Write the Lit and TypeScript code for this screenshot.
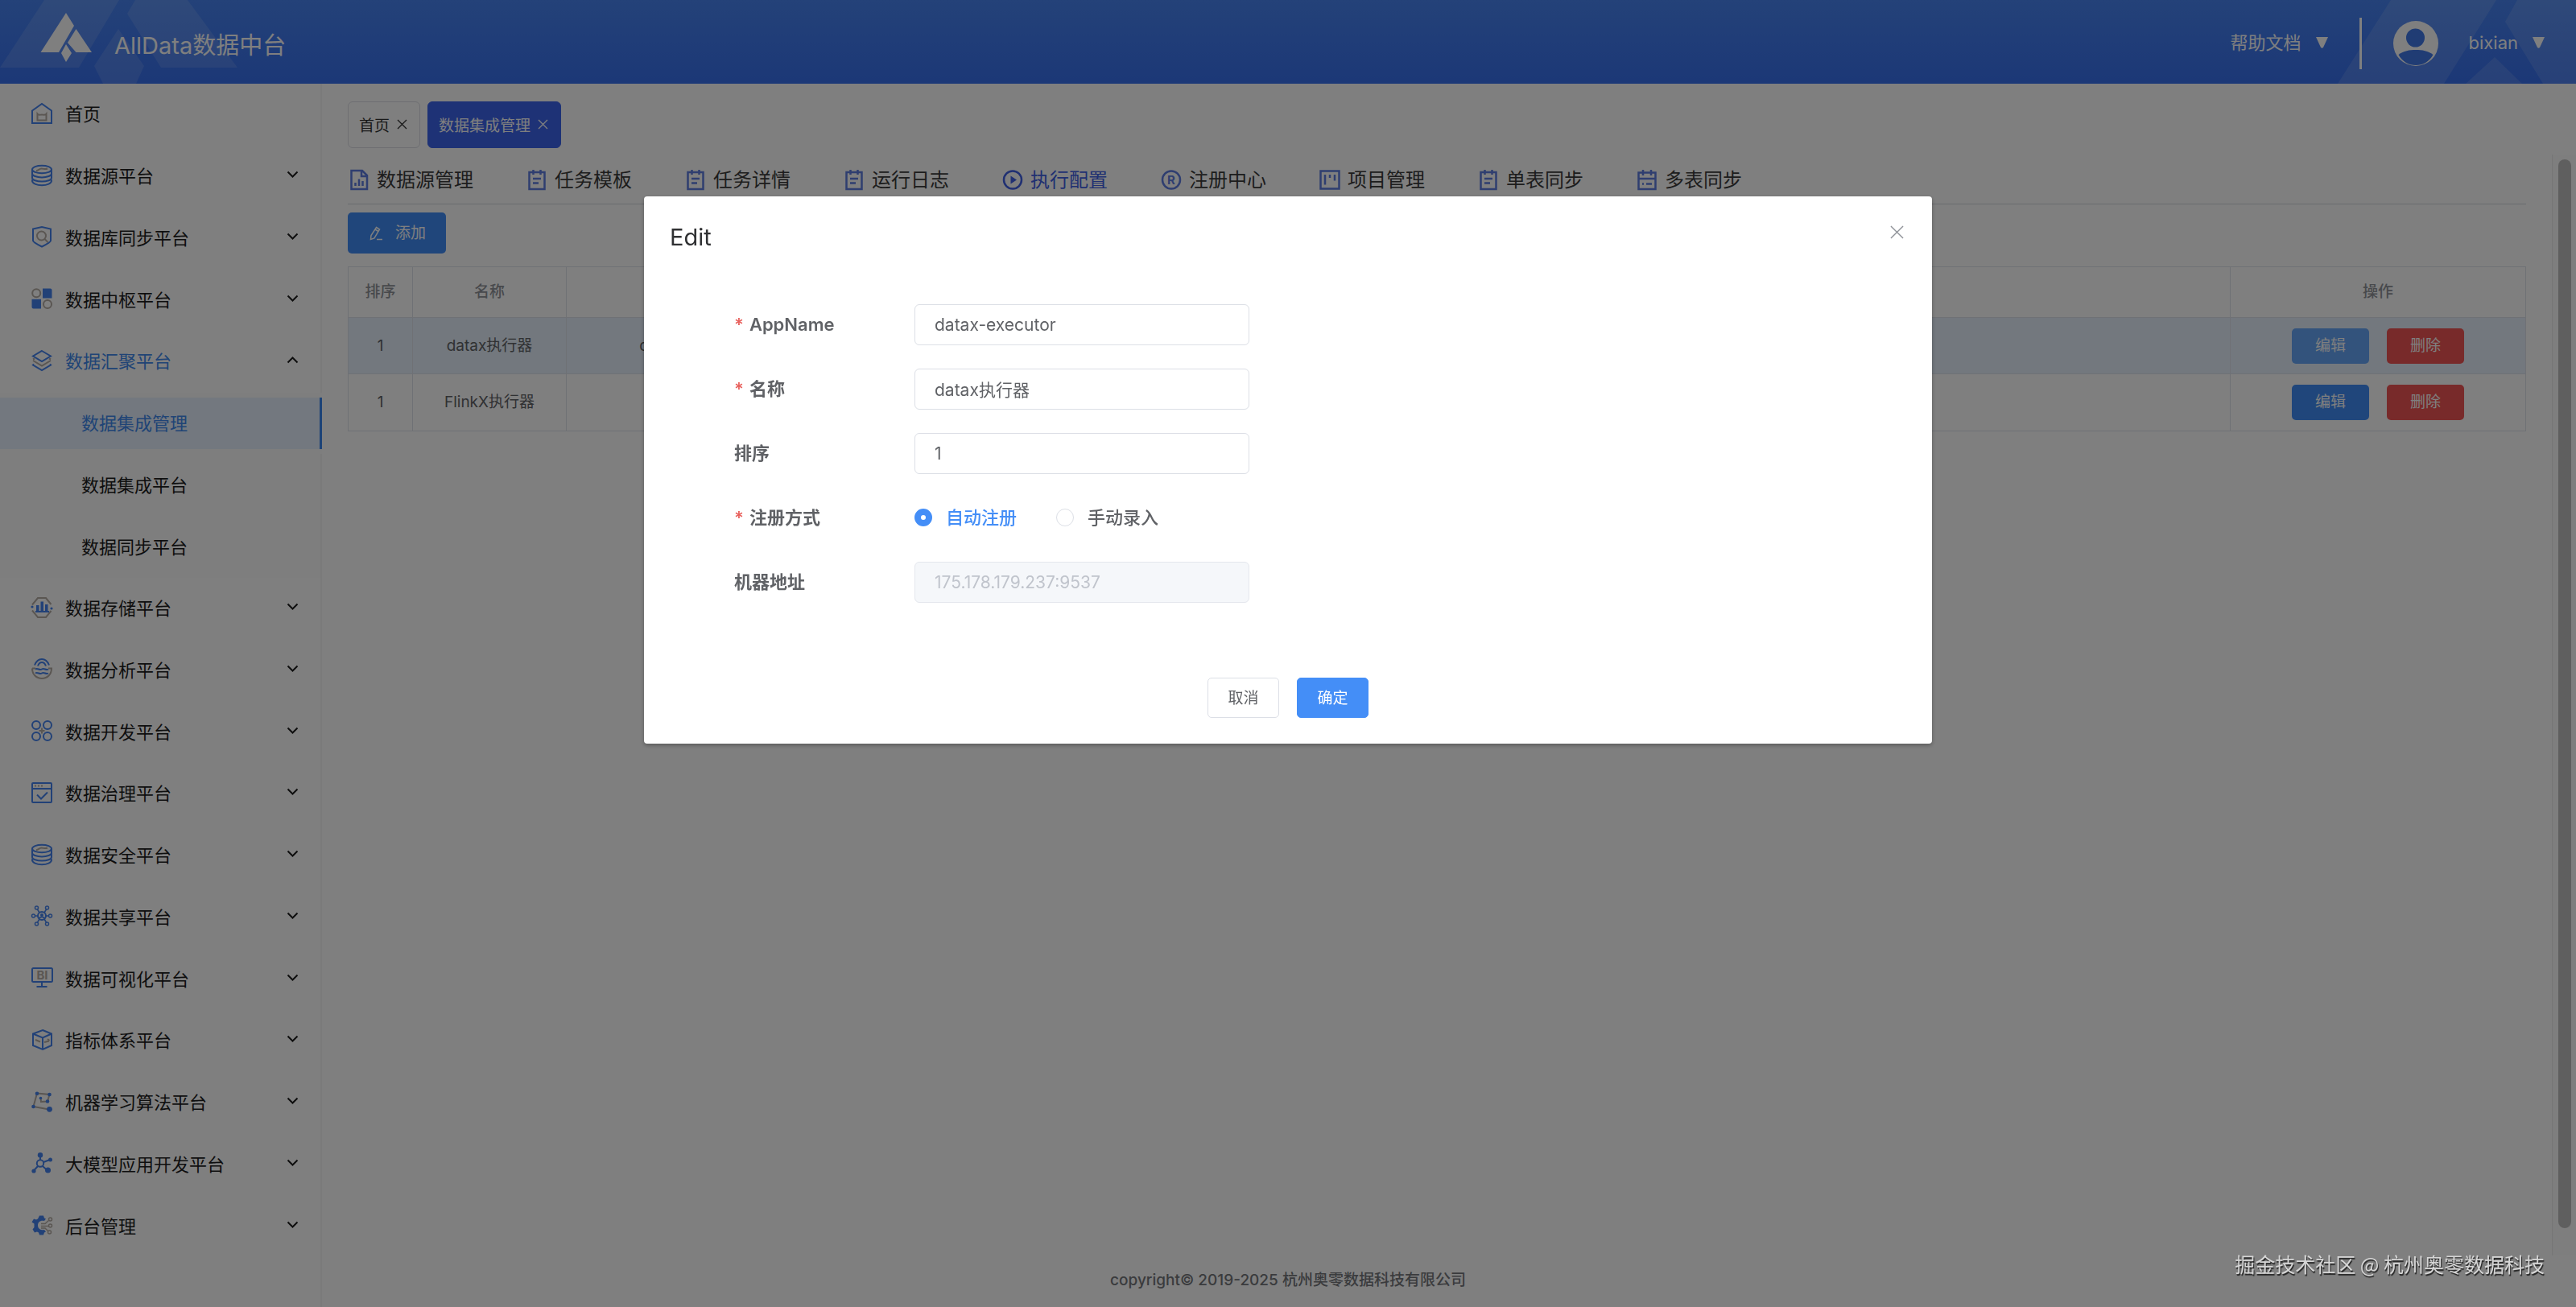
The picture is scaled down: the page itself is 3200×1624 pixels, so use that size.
import { LitElement, html, svg, css, nothing } from "lit";
import type { SVGTemplateResult } from "lit";
import { customElement, state } from "lit/decorators.js";
import { classMap } from "lit/directives/class-map.js";

const disc = svg`
  <ellipse cx="13" cy="5.5" rx="12" ry="4.7"/>
  <path d="M1 5.5v5.2c0 2.6 5.4 4.7 12 4.7s12-2.1 12-4.7V5.5M1 10.7v5.2c0 2.6 5.4 4.7 12 4.7s12-2.1 12-4.7v-5.2M2 17.500c-.6.5-1 1.400-1 2.300C1 22.700 6.400 25.200 13 25.200s12-2.500 12-5.400c0-.9-.4-1.700-1-2.300"/>
  <path class="alt" d="M6 7c2.500.5 3.500-2.500 6.500-2.500S17 6 20 4.500"/>`;

const sideIcons: Record<string, SVGTemplateResult> = {
  home: svg`
    <path d="M1 9.500 13 1l12 8.500V25H1Z"/>
    <path class="alt" d="M7.500 13.500v8h11v-8c-1.500 2-3.500 1-5.500 1s-4 1-5.500-1Z"/>`,
  source: disc,
  shield: svg`
    <path d="M2 3.500 13 1l11 2.500V18c0 2-5 4.500-11 7.500C7 22.500 2 20 2 18Z"/>
    <circle class="alt" cx="12.500" cy="12" r="5.500"/><path class="alt" d="m16.500 16 4 4"/>`,
  hub: svg`
    <circle class="alt" cx="6.200" cy="6.300" r="5"/><circle class="alt" cx="20" cy="20" r="5"/>
    <path class="solid" d="M14 .5h9.500a2 2 0 0 1 2 2v10H14ZM.5 13.800H12v11.700H2.500a2 2 0 0 1-2-2Z"/>`,
  layers: svg`
    <path d="M13 1 24 7.500 13 14 2 7.500Z"/>
    <path class="alt" d="m2 11.500 2-1M24 11.500l-2-1M2 13l11 6.500L24 13"/>
    <path d="m3 17.500-1 1L13 25l11-6.500-1-1"/>`,
  storage: svg`
    <path class="alt" d="M1 9.500 8 1h10l6.500 8M1 16.500 8 25h10l6.500-8"/>
    <circle class="solid" cx="1" cy="12" r="1.600"/><circle class="solid" cx="25" cy="14" r="1.600"/>
    <path class="solid" d="M6 10h3.500v7H6ZM11.500 5.500h3.500V17h-3.500ZM17 9h3.500v8H17ZM5 17h17v2H5Z"/>`,
  analysis: svg`
    <path d="M4 8.500C6 3.500 9 1 13 1s7 2.500 9 7.500M8 9.500c1-3 3-4.500 5-4.500s4 1.500 5 4.500"/>
    <path class="alt" d="M1 12.500h4M21 12.500h4C25 20 20 25 13 25S1 20 1 12.500"/>
    <path d="M5 13.500c3-2 5 2 8 0s5 2 8 0M5 18.500c3-2 5 2 8 0s5 2 8 0"/>`,
  develop: svg`
    <circle cx="6" cy="6" r="5"/><circle cx="20" cy="6" r="5"/><circle cx="6" cy="20" r="5"/><circle cx="20" cy="20" r="5"/>
    <path class="alt" d="M13 9.500v7M9.500 13h7"/>`,
  govern: svg`
    <rect x="1" y="1" width="24" height="24" rx="1"/><path d="M1 8h24M7 15.500l5 5 8-8"/>
    <path class="alt" d="M4 4.500h2M8 4.500h2M12 4.500h2"/>`,
  share: svg`
    <circle cx="13" cy="13" r="5"/><circle class="solid" cx="13" cy="12" r="2"/><path d="M9.500 16c2-2 5-2 7 0"/>
    <g class="thin"><circle cx="2.500" cy="13" r="2"/><circle cx="23.500" cy="13" r="2"/><circle cx="6.500" cy="3" r="2"/><circle cx="19.500" cy="3" r="2"/><circle cx="6.500" cy="23" r="2"/><circle cx="19.500" cy="23" r="2"/>
    <path d="M4.500 13H8M18 13h3.500M7.500 5l2.500 4M18.500 5 16 9M7.500 21l2.500-4M18.500 21 16 17"/></g>`,
  bi: svg`
    <rect x="1" y="1" width="25" height="17" rx="1.500"/><path d="M13 18v5M6.500 24h13"/>
    <text class="glyph" x="13.500" y="15" text-anchor="middle">BI</text>`,
  cube: svg`
    <path d="M14 1 25 5.500V20L14 25 2 20V5.500ZM2 5.500l12 5 11-5M14 10.500V25"/>
    <path class="alt" d="m5 13 6 2.500M16 16l6-1.500M20 12l2.500 2"/>`,
  learn: svg`
    <path class="alt" d="M7 2.500 22.500 4 20 12.500l-8 .5-.5-5M7 2.500 2.500 19 22 22.500"/>
    <g class="solid"><circle cx="7" cy="2.800" r="2.300"/><circle cx="22.500" cy="4" r="2.300"/><circle cx="20" cy="12.500" r="2.300"/><circle cx="11.500" cy="8.500" r="1.800"/><circle cx="2.500" cy="19" r="2.300"/><circle cx="22.500" cy="22.300" r="3.400"/></g>`,
  model: svg`
    <circle cx="11" cy="13.500" r="4.200"/><path d="M11 9V3M15 12l8-3M8 17l-5 5.500M14 17l5 4.500"/>
    <g class="solid"><circle cx="11" cy="3.300" r="3.200"/><circle cx="23.500" cy="9" r="2.500"/><circle cx="3" cy="23" r="2.600"/><circle cx="20.500" cy="22" r="3.500"/></g>`,
  admin: svg`
    <path class="solid" d="M10 1.500h5l1 3 2 1-2 2.500c-5-1-8 1.500-8 5.500s3 6.500 8 5.500l2 2.500-2 1-1 3h-5l-1-3-2-1-3 1-2.500-4 2-2.500v-4.500L.5 9.500 3 5.500l3 1 2-1Z"/>
    <path class="alt thin" d="M12 11.500h5l4.500-4M12 14.500h9M12 17h5l4 4"/>
    <g class="alt thin"><circle cx="23.500" cy="6" r="2"/><circle cx="23.500" cy="14" r="2"/><circle cx="22.500" cy="22" r="2"/></g>`,
};

const notepad = svg`
  <path d="M3.500 4h19v21h-19ZM8.500 1v6M17.500 1v6M8 12h10M8 17.500h7"/>`;

const navIcons: Record<string, SVGTemplateResult> = {
  chart: svg`<path d="M3.500 2H17l6 6v17H3.500ZM16 2v7h7M8.500 21v-4M13 21V12.500M17.500 21v-6"/>`,
  note: notepad,
  play: svg`<circle cx="13" cy="13.500" r="11"/><path class="solid" d="M10.500 8.500 18 13.500l-7.500 5Z"/>`,
  registered: svg`<circle cx="13" cy="13.500" r="11"/><text class="glyph blue" x="13" y="19" text-anchor="middle">R</text>`,
  board: svg`<path d="M1.500 2.500h23v22h-23ZM7 7v12.500M13 7v4M19 7v7.500"/>`,
  schedule: svg`<path d="M2.500 4.500h21V25h-21ZM8 1v7M18 1v7M2.500 12h21M7 18.500h2M12 18.500h7"/>`,
};

interface SideEntry { label: string; icon?: string; home?: boolean; open?: boolean; sub?: boolean; active?: boolean }

const sideEntries: SideEntry[] = [
  { label: "首页", icon: "home", home: true },
  { label: "数据源平台", icon: "source" },
  { label: "数据库同步平台", icon: "shield" },
  { label: "数据中枢平台", icon: "hub" },
  { label: "数据汇聚平台", icon: "layers", open: true },
  { label: "数据集成管理", sub: true, active: true },
  { label: "数据集成平台", sub: true },
  { label: "数据同步平台", sub: true },
  { label: "数据存储平台", icon: "storage" },
  { label: "数据分析平台", icon: "analysis" },
  { label: "数据开发平台", icon: "develop" },
  { label: "数据治理平台", icon: "govern" },
  { label: "数据安全平台", icon: "source" },
  { label: "数据共享平台", icon: "share" },
  { label: "数据可视化平台", icon: "bi" },
  { label: "指标体系平台", icon: "cube" },
  { label: "机器学习算法平台", icon: "learn" },
  { label: "大模型应用开发平台", icon: "model" },
  { label: "后台管理", icon: "admin" },
];

const navEntries = [
  { label: "数据源管理", icon: "chart" },
  { label: "任务模板", icon: "note" },
  { label: "任务详情", icon: "note" },
  { label: "运行日志", icon: "note" },
  { label: "执行配置", icon: "play", active: true },
  { label: "注册中心", icon: "registered" },
  { label: "项目管理", icon: "board" },
  { label: "单表同步", icon: "note" },
  { label: "多表同步", icon: "schedule" },
];

const rows = [
  { order: 1, title: "datax执行器", app: "datax-executor", hover: true },
  { order: 1, title: "FlinkX执行器", app: "", hover: false },
];

const sharedText = css`
  * { box-sizing: border-box; }
  button, input { font: inherit; color: inherit; margin: 0; }
  button { border: 0; padding: 0; background: none; cursor: pointer; }
  a { color: inherit; text-decoration: none; }
  svg { display: block; flex: none; }
  .icon { width: 27px; height: 27px; fill: none; stroke: #4583ee; stroke-width: 2; overflow: visible; }
  .icon .alt { stroke: #b4aca4; }
  .icon .thin { stroke-width: 1.5; }
  .icon .solid { fill: #4583ee; stroke: none; }
  .glyph { font: 700 15px Inter, "Liberation Sans", sans-serif; fill: #b4aca4; stroke: none; }
  .glyph.blue { fill: #5e7ce0; }
`;

@customElement("app-header")
class AppHeader extends LitElement {
  static styles = [sharedText, css`
    :host { display: flex; align-items: center; justify-content: space-between; position: relative; height: 104px; padding: 0 39px 0 50px;
      background: linear-gradient(#4884f2, #3870ee); color: #fff; overflow: hidden; }
    .decor { position: absolute; top: 0; height: 104px; fill: #fff; fill-opacity: .12; }
    .decor.left { left: 0; width: 300px; }
    .decor.right { right: 0; width: 300px; }
    .brand, .tools { position: relative; display: flex; align-items: center; }
    .brand { gap: 28px; font-size: 29px; line-height: 40px; padding-top: 4px; }
    .brand .logo { width: 64px; height: 62px; fill: #fff; margin-bottom: 16px; }
    .brand h1 { margin: 6px 0 0; font: inherit; }
    .tools { font-size: 22px; line-height: 32px; padding-top: 2px; }
    .menu { display: flex; align-items: center; gap: 18px; }
    .caret { width: 15px; height: 14px; fill: #fff; }
    .rule { width: 3px; height: 64px; margin: 2px 39px 0; background: #fff; }
    .avatar { width: 56px; height: 56px; margin: 2px 38px 0 0; }
  `];

  render() {
    const caret = html`<svg class="caret" viewBox="0 0 15 14" aria-hidden="true"><path d="M0 0h15L9 13q-1.500 1.500-3 0Z"/></svg>`;
    return html`
      <svg class="decor left" viewBox="0 0 300 104" aria-hidden="true">
        <path d="M55 0h93L98 84H0ZM168 0h65l62 84h-95L158 17ZM147 36l32 46-10 22h-41l-11-22Z"/>
      </svg>
      <svg class="decor right" viewBox="0 0 300 104" aria-hidden="true">
        <path d="M70 0h131l-65 104H4ZM227 0h73v104h-41L212 27ZM199 71l34 33h-70Z"/>
      </svg>
      <div class="brand">
        <svg class="logo" viewBox="50 15 64 62" aria-hidden="true">
          <path d="M82 16 92 32 73 65H50.500ZM94.500 36 114 65H94.500L84 53ZM82 55l7 11-7 11-6-11Z"/>
        </svg>
        <h1>AllData数据中台</h1>
      </div>
      <div class="tools">
        <button class="menu">帮助文档 ${caret}</button>
        <span class="rule"></span>
        <svg class="avatar" viewBox="0 0 56 56" aria-hidden="true">
          <circle cx="28" cy="28" r="28" fill="#fff"/><circle cx="27.500" cy="21" r="11.500" fill="#4078e8"/>
          <path d="M6.500 42C13 37 20 36 28 36s15 1 21.500 6C45 50.500 37 55 28 55S11 50.500 6.500 42Z" fill="#4078e8"/>
        </svg>
        <button class="menu">bixian ${caret}</button>
      </div>`;
  }
}

@customElement("app-sidebar")
class AppSidebar extends LitElement {
  static styles = [sharedText, css`
    :host { display: block; padding-bottom: 62px; border-right: 2px solid #f4f4f4; font-size: 22px; line-height: 32px; color: #1c1c1c; }
    nav { height: 100%; display: grid; grid-auto-rows: 1fr; }
    .entry { display: flex; align-items: center; min-height: 64px; padding: 0 27px 0 39px; }
    .entry .icon { margin: 0 15px 2px 0; }
    .entry .label { flex: 1; }
    .entry.open { color: #4088ec; }
    .chevron { width: 15px; height: 10px; fill: none; stroke: #1c1c1c; stroke-width: 2; margin: 0 0 4px; }
    .chevron.up { transform: rotate(180deg); }
    .sub { display: flex; flex-direction: column; justify-content: center; background: #fcfcfc; }
    .sub a { display: flex; align-items: center; height: 64px; padding-left: 101px; }
    .sub.active { margin-right: -2px; }
    .sub.active a { background: #e6f1fe; color: #4088ec; border-right: 3px solid #3a86ee; }
  `];

  render() {
    return html`<nav>${sideEntries.map((e) => e.sub
      ? html`<div class=${classMap({ sub: true, active: !!e.active })}><a href="#">${e.label}</a></div>`
      : html`<a href="#" class=${classMap({ entry: true, open: !!e.open })}>
          <svg class="icon" viewBox="0 0 27 27" aria-hidden="true">${sideIcons[e.icon!]}</svg>
          <span class="label">${e.label}</span>
          ${e.home ? nothing : html`<svg class=${classMap({ chevron: true, up: !!e.open })} viewBox="0 0 15 10" aria-hidden="true"><path d="m1.500 1.500 6 6 6-6"/></svg>`}
        </a>`)}</nav>`;
  }
}

@customElement("app-workspace")
class AppWorkspace extends LitElement {
  static styles = [sharedText, css`
    :host { display: flex; min-width: 0; font-size: 19px; line-height: 28px; color: #606266; }
    .content { flex: 1; min-width: 0; padding: 22px 32px 0; }
    .tabs { display: flex; gap: 9px; }
    .tab { display: flex; align-items: center; gap: 9px; height: 58px; padding: 4px 15px 0 13px; border: 1px solid #dcdde4; border-radius: 6px; color: #333; }
    .tab.active { background: #3d65ec; border-color: #3d65ec; color: #fff; }
    .close { width: 13px; height: 13px; stroke: currentColor; stroke-width: 1.3; margin-bottom: 6px; }
    .nav { display: flex; gap: 66px; padding: 26px 1px 15px; border-bottom: 1px solid #d4d6dc; font-size: 24px; color: #3a3a3a; }
    .nav a { display: flex; align-items: center; gap: 9px; }
    .nav .icon { width: 26px; height: 28px; stroke: #5e7ce0; stroke-width: 2.5; }
    .nav .active { color: #4060e4; }
    .nav .active .icon { stroke: #4060e4; }
    .nav .active .solid { fill: #4060e4; }
    .add { display: flex; align-items: center; gap: 16px; height: 51px; margin: 10px 0 16px; padding: 0 25px 0 27px; border-radius: 5px; background: #418df6; color: #fff; }
    .pen { width: 16px; height: 18px; fill: none; stroke: #fff; stroke-width: 1.5; }
    table { width: 100%; table-layout: fixed; border-spacing: 0; border: 1px solid #dfe3ea; border-right: 0; text-align: center; }
    th, td { height: 70px; padding: 0; border: solid #dfe3ea; border-width: 0 1px 1px 0; }
    th { height: 63px; font-weight: 500; color: #909399; }
    tr:last-child td { border-bottom: 0; }
    .hover td { background: #e6f1fc; }
    .c-order { width: 80px; } .c-title { width: 191px; } .c-app { width: 318px; } .c-ops { width: 367px; }
    .ops { display: flex; justify-content: center; gap: 22px; }
    .ops button { width: 96px; height: 44px; border-radius: 5px; color: #fff; background: #418df6; }
    .hover .ops button { background: #66a6f8; }
    .ops button.danger, .hover .ops button.danger { background: #f05454; }
    .track { display: flex; width: 30px; margin: 88px 0 4px; padding: 6px 6px 34px 7px; border-left: 1px solid #ececec; background: #fcfcfc; }
    .thumb { flex: 1; border-radius: 8px; background: #bfbfbf; }
  `];

  render() {
    const close = html`<svg class="close" viewBox="0 0 13 13" aria-hidden="true"><path d="m1 1 11 11M12 1 1 12"/></svg>`;
    return html`
      <main class="content">
        <div class="tabs">
          <div class="tab"><a href="#">首页</a><button aria-label="关闭">${close}</button></div>
          <div class="tab active"><a href="#">数据集成管理</a><button aria-label="关闭">${close}</button></div>
        </div>
        <nav class="nav">${navEntries.map((n) => html`
          <a href="#" class=${classMap({ active: !!n.active })}><svg class="icon" viewBox="0 0 26 28" aria-hidden="true">${navIcons[n.icon]}</svg>${n.label}</a>`)}
        </nav>
        <button class="add">
          <svg class="pen" viewBox="0 0 16 18" aria-hidden="true"><path d="m8.500 1.500 4 2.500-6.500 11-4.500 1.500.5-5ZM7 4l4 2.500M9 16.500h7"/></svg>添加
        </button>
        <table>
          <colgroup><col class="c-order"><col class="c-title"><col class="c-app"><col><col class="c-ops"></colgroup>
          <thead><tr><th>排序</th><th>名称</th><th></th><th></th><th>操作</th></tr></thead>
          <tbody>${rows.map((r) => html`
            <tr class=${classMap({ hover: r.hover })}>
              <td>${r.order}</td><td>${r.title}</td><td>${r.app}</td><td></td>
              <td><div class="ops"><button>编辑</button><button class="danger">删除</button></div></td>
            </tr>`)}</tbody>
        </table>
      </main>
      <div class="track" aria-hidden="true"><div class="thumb"></div></div>`;
  }
}

@customElement("edit-dialog")
class EditDialog extends LitElement {
  @state() private mode = "auto";

  static styles = [sharedText, css`
    :host { position: fixed; inset: 0; display: flex; justify-content: center; align-items: flex-start; padding-top: 15vh; background: rgba(0, 0, 0, .5); }
    .panel { width: 50%; padding: 32px; border-radius: 4px; background: #fff; box-shadow: 0 2px 5px rgba(0, 0, 0, .3); color: #606266; }
    header { display: flex; justify-content: space-between; align-items: flex-start; color: #303133; font-size: 29px; line-height: 38px; }
    h2 { margin: 0; font: inherit; }
    .close { padding: 4px 3px; }
    .close svg { width: 17px; height: 17px; stroke: #909399; stroke-width: 1.5; }
    form { display: grid; grid-template-columns: 224px 416px; grid-auto-rows: 51px; row-gap: 29px; align-items: center; padding: 64px 80px 93px; font-size: 22px; line-height: 32px; }
    .label { font-weight: 600; }
    .required::before { content: "*"; margin-right: 7px; color: #e8605c; }
    .text { width: 100%; height: 51px; padding: 0 24px; border: 1px solid #dcdfe6; border-radius: 6px; background: #fff; font-size: 21px; outline: 0; }
    .text:disabled { background: #f5f7fa; border-color: #e4e7ed; color: #c0c4cc; }
    .choices { display: flex; gap: 49px; font-weight: 500; }
    .choice { display: flex; align-items: center; gap: 17px; }
    .choice.on { color: #448ef7; }
    .choice input { appearance: none; width: 22px; height: 22px; border: 1px solid #dcdfe6; border-radius: 50%; background: #fff; }
    .choice input:checked { border: 8px solid #448ef7; }
    footer { display: flex; justify-content: center; gap: 22px; font-size: 19px; line-height: 28px; }
    footer button { width: 89px; height: 50px; padding-top: 2px; border: 1px solid #dcdfe6; border-radius: 5px; }
    footer .primary { background: #448ef7; border-color: #448ef7; color: #fff; }
  `];

  private choice(value: string, text: string) {
    const on = this.mode === value;
    return html`<label class=${classMap({ choice: true, on })}>
      <input type="radio" name="mode" value=${value} .checked=${on} @change=${() => { this.mode = value; }}>${text}</label>`;
  }

  render() {
    return html`
      <section class="panel" role="dialog" aria-modal="true" aria-labelledby="title">
        <header>
          <h2 id="title">Edit</h2>
          <button class="close" aria-label="Close"><svg viewBox="0 0 18 18"><path d="m1 1 16 16M17 1 1 17"/></svg></button>
        </header>
        <form>
          <label class="label required" for="app">AppName</label><input class="text" id="app" value="datax-executor">
          <label class="label required" for="name">名称</label><input class="text" id="name" value="datax执行器">
          <label class="label" for="order">排序</label><input class="text" id="order" value="1">
          <span class="label required" id="mode">注册方式</span>
          <div class="choices" role="radiogroup" aria-labelledby="mode">${this.choice("auto", "自动注册")}${this.choice("manual", "手动录入")}</div>
          <label class="label" for="address">机器地址</label><input class="text" id="address" value="175.178.179.237:9537" disabled>
        </form>
        <footer><button>取消</button><button class="primary">确定</button></footer>
      </section>`;
  }
}

@customElement("app-root")
class AppRoot extends LitElement {
  static styles = css`
    :host { display: grid; grid-template: auto 1fr 60px / 400px minmax(0, 1fr); min-height: 100vh; background: #fff;
      font-family: Inter, "Noto Sans CJK SC", sans-serif; }
    app-header { grid-area: 1 / 1 / 2 / 3; }
    app-sidebar { grid-area: 2 / 1 / 4 / 2; }
    app-workspace { grid-area: 2 / 2 / 3 / 3; }
    .copyright { grid-area: 3 / 1 / 4 / 3; padding-top: 13px; text-align: center; font-size: 19px; line-height: 28px; font-weight: 500; color: #74767a; }
    .watermark { position: fixed; right: 39px; bottom: 36px; font: 25px/36px "Noto Sans CJK SC", sans-serif; color: #d6d6d6; text-shadow: 1px 2px 1px #222; }
  `;

  render() {
    return html`
      <app-header></app-header>
      <app-sidebar></app-sidebar>
      <app-workspace></app-workspace>
      <div class="copyright">copyright© 2019-2025 杭州奥零数据科技有限公司</div>
      <edit-dialog></edit-dialog>
      <div class="watermark">掘金技术社区 @ 杭州奥零数据科技</div>`;
  }
}
